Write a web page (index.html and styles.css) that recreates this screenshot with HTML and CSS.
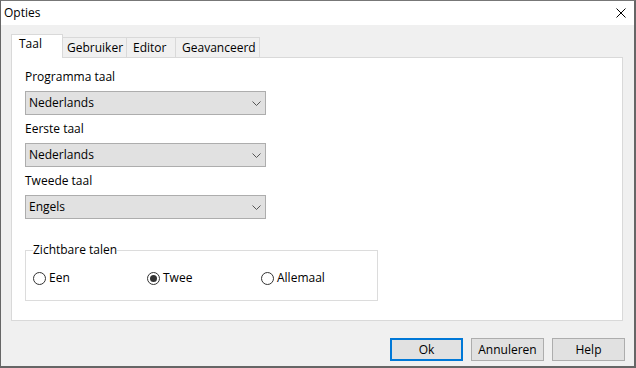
FILE: index.html
```html
<!DOCTYPE html>
<html lang="nl">
<head>
    <meta charset="UTF-8">
    <title>Opties</title>
    <link rel="stylesheet" href="styles.css">
</head>
<body>

    <div class="window">

        <!-- Title Bar -->
        <div class="titlebar">
            <span class="title">Opties</span>
            <svg class="close" width="10" height="10" viewBox="0 0 10 10">
                <path d="M0.5 0.5 L9.5 9.5 M9.5 0.5 L0.5 9.5" stroke="#000" stroke-width="1" fill="none"/>
            </svg>
        </div>

        <div class="content">

            <!-- Tabs -->
            <div class="tabs">
                <div class="tab tab-taal active">Taal</div>
                <div class="tab tab-gebruiker">Gebruiker</div>
                <div class="tab tab-editor">Editor</div>
                <div class="tab tab-geavanceerd">Geavanceerd</div>
            </div>

            <!-- Tab Panel -->
            <div class="panel">
                <div class="field-label first">Programma taal</div>
                <div class="combo">
                    <span>Nederlands</span>
                    <svg class="chevron" width="9" height="5" viewBox="0 0 9 5">
                        <path d="M0.5 0.5 L4.5 4.5 L8.5 0.5" stroke="#555" stroke-width="1" fill="none"/>
                    </svg>
                </div>

                <div class="field-label">Eerste taal</div>
                <div class="combo">
                    <span>Nederlands</span>
                    <svg class="chevron" width="9" height="5" viewBox="0 0 9 5">
                        <path d="M0.5 0.5 L4.5 4.5 L8.5 0.5" stroke="#555" stroke-width="1" fill="none"/>
                    </svg>
                </div>

                <div class="field-label">Tweede taal</div>
                <div class="combo">
                    <span>Engels</span>
                    <svg class="chevron" width="9" height="5" viewBox="0 0 9 5">
                        <path d="M0.5 0.5 L4.5 4.5 L8.5 0.5" stroke="#555" stroke-width="1" fill="none"/>
                    </svg>
                </div>

                <fieldset class="group">
                    <legend>Zichtbare talen</legend>
                    <div class="radios">
                        <label class="radio"><span class="circle"></span>Een</label>
                        <label class="radio"><span class="circle checked"></span>Twee</label>
                        <label class="radio"><span class="circle"></span>Allemaal</label>
                    </div>
                </fieldset>
            </div>

            <!-- Dialog Buttons -->
            <div class="buttons">
                <div class="button default">Ok</div>
                <div class="button">Annuleren</div>
                <div class="button">Help</div>
            </div>

        </div>
    </div>

</body>
</html>
```

FILE: styles.css
```css
* {
    margin: 0;
    padding: 0;
    box-sizing: border-box;
}

body {
    font-family: 'Open Sans', 'Noto Sans', sans-serif;
    font-size: 12px;
    line-height: 16px;
    color: #000;
    background-color: #fff;
}

/* Window */
.window {
    width: 636px;
    height: 368px;
    display: flex;
    flex-direction: column;
    background-color: #f0f0f0;
    border-top: 1px solid #777;
    border-left: 1px solid #666;
    border-right: 2px solid #666;
    border-bottom: 2px solid #666;
}

/* Title Bar */
.titlebar {
    height: 24px;
    display: flex;
    align-items: center;
    justify-content: space-between;
    background-color: #fff;
    padding: 0 8px 0 3px;
}

.close {
    display: block;
}

/* Content */
.content {
    flex: 1;
    padding: 9px 11px 0 10px;
}

/* Tabs */
.tabs {
    display: flex;
    align-items: flex-end;
}

.tab {
    height: 20px;
    padding: 2px 0 0 6px;
    margin-left: -1px;
    background-color: #f0f0f0;
    border: 1px solid #d9d9d9;
    border-bottom: none;
    white-space: nowrap;
}

.tab.active {
    position: relative;
    z-index: 1;
    height: 24px;
    margin-left: 0;
    margin-bottom: -1px;
    padding: 1px 0 0 7px;
    background-color: #fff;
}

.tab-taal { width: 52px; }
.tab-gebruiker { width: 65px; padding-left: 4px; }
.tab-editor { width: 50px; }
.tab-geavanceerd { width: 85px; }

/* Panel */
.panel {
    height: 264px;
    background-color: #fff;
    border: 1px solid #d9d9d9;
    padding: 11px 13px 0 13px;
}

.field-label {
    margin-top: 6px;
    margin-bottom: 6px;
}

.field-label.first {
    margin-top: 0;
}

.combo {
    width: 241px;
    height: 24px;
    display: flex;
    align-items: center;
    justify-content: space-between;
    padding: 0 4px 0 3px;
    background-color: #e1e1e1;
    border: 1px solid #adadad;
}

.chevron {
    display: block;
}

/* Group Box */
.group {
    width: 353px;
    margin-top: 23px;
    padding: 0 0 14px 7px;
    border: 1px solid #dcdcdc;
}

.group legend {
    padding: 0;
}

.radios {
    display: flex;
    margin-top: 12px;
}

.radio {
    width: 114px;
    display: flex;
    align-items: center;
    gap: 3px;
}

.circle {
    width: 13px;
    height: 13px;
    border: 1px solid #333;
    border-radius: 50%;
    display: flex;
    align-items: center;
    justify-content: center;
}

.circle.checked::after {
    content: '';
    width: 7px;
    height: 7px;
    border-radius: 50%;
    background-color: #333;
}

/* Buttons */
.buttons {
    display: flex;
    justify-content: flex-end;
    gap: 8px;
    margin-top: 17px;
    margin-right: -2px;
}

.button {
    width: 73px;
    height: 23px;
    display: flex;
    align-items: center;
    justify-content: center;
    background-color: #e1e1e1;
    border: 1px solid #adadad;
}

.button.default {
    border: 2px solid #0078d7;
}
```
